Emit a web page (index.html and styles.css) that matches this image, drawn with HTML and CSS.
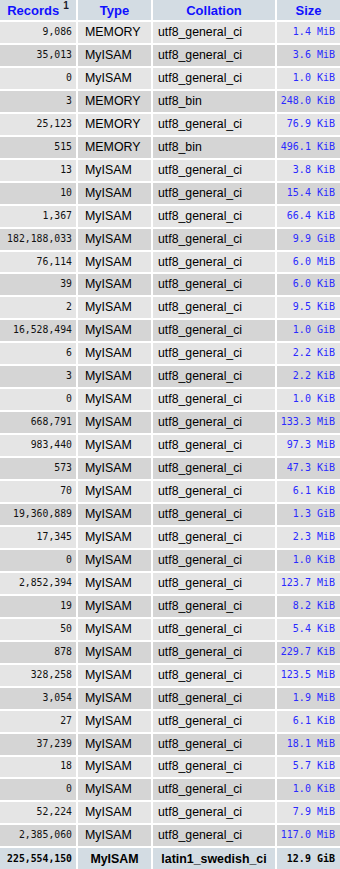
FILE: index.html
```html
<!DOCTYPE html>
<html>
<head>
<meta charset="utf-8">
<link rel="stylesheet" href="styles.css">
</head>
<body>
<table class="tbl">
<colgroup><col class="c-rec"><col class="c-type"><col class="c-coll"><col class="c-size"></colgroup>
<thead>
<tr><th><a class="hl">Records</a><sup class="fn">1</sup></th><th><a class="hl">Type</a></th><th><a class="hl">Collation</a></th><th><a class="hl">Size</a></th></tr>
</thead>
<tbody>
<tr><td class="num">9,086</td><td class="type">MEMORY</td><td class="coll">utf8_general_ci</td><td class="size">1.4 MiB</td></tr>
<tr><td class="num">35,013</td><td class="type">MyISAM</td><td class="coll">utf8_general_ci</td><td class="size">3.6 MiB</td></tr>
<tr><td class="num">0</td><td class="type">MyISAM</td><td class="coll">utf8_general_ci</td><td class="size">1.0 KiB</td></tr>
<tr><td class="num">3</td><td class="type">MEMORY</td><td class="coll">utf8_bin</td><td class="size">248.0 KiB</td></tr>
<tr><td class="num">25,123</td><td class="type">MEMORY</td><td class="coll">utf8_general_ci</td><td class="size">76.9 KiB</td></tr>
<tr><td class="num">515</td><td class="type">MEMORY</td><td class="coll">utf8_bin</td><td class="size">496.1 KiB</td></tr>
<tr><td class="num">13</td><td class="type">MyISAM</td><td class="coll">utf8_general_ci</td><td class="size">3.8 KiB</td></tr>
<tr><td class="num">10</td><td class="type">MyISAM</td><td class="coll">utf8_general_ci</td><td class="size">15.4 KiB</td></tr>
<tr><td class="num">1,367</td><td class="type">MyISAM</td><td class="coll">utf8_general_ci</td><td class="size">66.4 KiB</td></tr>
<tr><td class="num">182,188,033</td><td class="type">MyISAM</td><td class="coll">utf8_general_ci</td><td class="size">9.9 GiB</td></tr>
<tr><td class="num">76,114</td><td class="type">MyISAM</td><td class="coll">utf8_general_ci</td><td class="size">6.0 MiB</td></tr>
<tr><td class="num">39</td><td class="type">MyISAM</td><td class="coll">utf8_general_ci</td><td class="size">6.0 KiB</td></tr>
<tr><td class="num">2</td><td class="type">MyISAM</td><td class="coll">utf8_general_ci</td><td class="size">9.5 KiB</td></tr>
<tr><td class="num">16,528,494</td><td class="type">MyISAM</td><td class="coll">utf8_general_ci</td><td class="size">1.0 GiB</td></tr>
<tr><td class="num">6</td><td class="type">MyISAM</td><td class="coll">utf8_general_ci</td><td class="size">2.2 KiB</td></tr>
<tr><td class="num">3</td><td class="type">MyISAM</td><td class="coll">utf8_general_ci</td><td class="size">2.2 KiB</td></tr>
<tr><td class="num">0</td><td class="type">MyISAM</td><td class="coll">utf8_general_ci</td><td class="size">1.0 KiB</td></tr>
<tr><td class="num">668,791</td><td class="type">MyISAM</td><td class="coll">utf8_general_ci</td><td class="size">133.3 MiB</td></tr>
<tr><td class="num">983,440</td><td class="type">MyISAM</td><td class="coll">utf8_general_ci</td><td class="size">97.3 MiB</td></tr>
<tr><td class="num">573</td><td class="type">MyISAM</td><td class="coll">utf8_general_ci</td><td class="size">47.3 KiB</td></tr>
<tr><td class="num">70</td><td class="type">MyISAM</td><td class="coll">utf8_general_ci</td><td class="size">6.1 KiB</td></tr>
<tr><td class="num">19,360,889</td><td class="type">MyISAM</td><td class="coll">utf8_general_ci</td><td class="size">1.3 GiB</td></tr>
<tr><td class="num">17,345</td><td class="type">MyISAM</td><td class="coll">utf8_general_ci</td><td class="size">2.3 MiB</td></tr>
<tr><td class="num">0</td><td class="type">MyISAM</td><td class="coll">utf8_general_ci</td><td class="size">1.0 KiB</td></tr>
<tr><td class="num">2,852,394</td><td class="type">MyISAM</td><td class="coll">utf8_general_ci</td><td class="size">123.7 MiB</td></tr>
<tr><td class="num">19</td><td class="type">MyISAM</td><td class="coll">utf8_general_ci</td><td class="size">8.2 KiB</td></tr>
<tr><td class="num">50</td><td class="type">MyISAM</td><td class="coll">utf8_general_ci</td><td class="size">5.4 KiB</td></tr>
<tr><td class="num">878</td><td class="type">MyISAM</td><td class="coll">utf8_general_ci</td><td class="size">229.7 KiB</td></tr>
<tr><td class="num">328,258</td><td class="type">MyISAM</td><td class="coll">utf8_general_ci</td><td class="size">123.5 MiB</td></tr>
<tr><td class="num">3,054</td><td class="type">MyISAM</td><td class="coll">utf8_general_ci</td><td class="size">1.9 MiB</td></tr>
<tr><td class="num">27</td><td class="type">MyISAM</td><td class="coll">utf8_general_ci</td><td class="size">6.1 KiB</td></tr>
<tr><td class="num">37,239</td><td class="type">MyISAM</td><td class="coll">utf8_general_ci</td><td class="size">18.1 MiB</td></tr>
<tr><td class="num">18</td><td class="type">MyISAM</td><td class="coll">utf8_general_ci</td><td class="size">5.7 KiB</td></tr>
<tr><td class="num">0</td><td class="type">MyISAM</td><td class="coll">utf8_general_ci</td><td class="size">1.0 KiB</td></tr>
<tr><td class="num">52,224</td><td class="type">MyISAM</td><td class="coll">utf8_general_ci</td><td class="size">7.9 MiB</td></tr>
<tr><td class="num">2,385,060</td><td class="type">MyISAM</td><td class="coll">utf8_general_ci</td><td class="size">117.0 MiB</td></tr>
</tbody>
<tfoot>
<tr><th class="num">225,554,150</th><th class="ftext">MyISAM</th><th class="ftext">latin1_swedish_ci</th><th class="size-f">12.9 GiB</th></tr>
</tfoot>
</table>
</body>
</html>
```
FILE: styles.css
```css
html, body {
  margin: 0;
  padding: 0;
  background: #ffffff;
  overflow: hidden;
}
body {
  width: 340px;
  height: 869px;
  font-family: "Liberation Sans", Arial, sans-serif;
  font-size: 12px;
  color: #000;
}
.tbl {
  table-layout: fixed;
  width: 344px;
  margin: -2px 0 0 -2px;
  border-collapse: separate;
  border-spacing: 2px;
}
.c-rec { width: 76px; }
.c-type { width: 73px; }
.c-coll { width: 122px; }
.c-size { width: 63px; }

thead th {
  background: #d3dce3;
  height: 20px;
  padding: 0;
  text-align: center;
  font-size: 13px;
  font-weight: bold;
  vertical-align: middle;
  line-height: 15px;
}
.hl {
  color: #1010ff;
  text-decoration: none;
}
.fn {
  font-size: 10px;
  font-weight: bold;
  color: #1a1a2a;
  margin-left: 4px;
  vertical-align: 6px;
  line-height: 0;
}
tbody td {
  height: 19.96px;
  padding: 0 0 1px 0;
  background: #e5e5e5;
  vertical-align: middle;
  white-space: nowrap;
  overflow: hidden;
  line-height: 14px;
}
tbody tr:nth-child(even) td {
  background: #d5d5d5;
}
.num {
  font-family: "DejaVu Sans Mono", monospace;
  font-size: 9.8px;
  text-align: right;
  padding-right: 4px;
  color: #111;
}
tbody td.num { padding-right: 4px; }
tbody td.type { padding-left: 7px; font-size: 12.4px; }
tbody td.coll { padding-left: 5px; font-size: 12.3px; }
.size {
  font-family: "DejaVu Sans Mono", monospace;
  font-size: 10px;
  text-align: right;
  color: #2a2aff;
}
tbody td.size { padding-right: 5px; }

tfoot th {
  background: #d3dce3;
  height: 21px;
  padding: 0;
  font-weight: bold;
  vertical-align: middle;
  white-space: nowrap;
  line-height: 14px;
}
tfoot th.num {
  font-size: 9.8px;
  padding-right: 4px;
  color: #000;
}
tfoot th.ftext {
  text-align: center;
  font-size: 12.4px;
}
tfoot th.size-f {
  font-family: "DejaVu Sans Mono", monospace;
  font-size: 10px;
  text-align: right;
  padding-right: 5px;
  color: #000;
}
```
